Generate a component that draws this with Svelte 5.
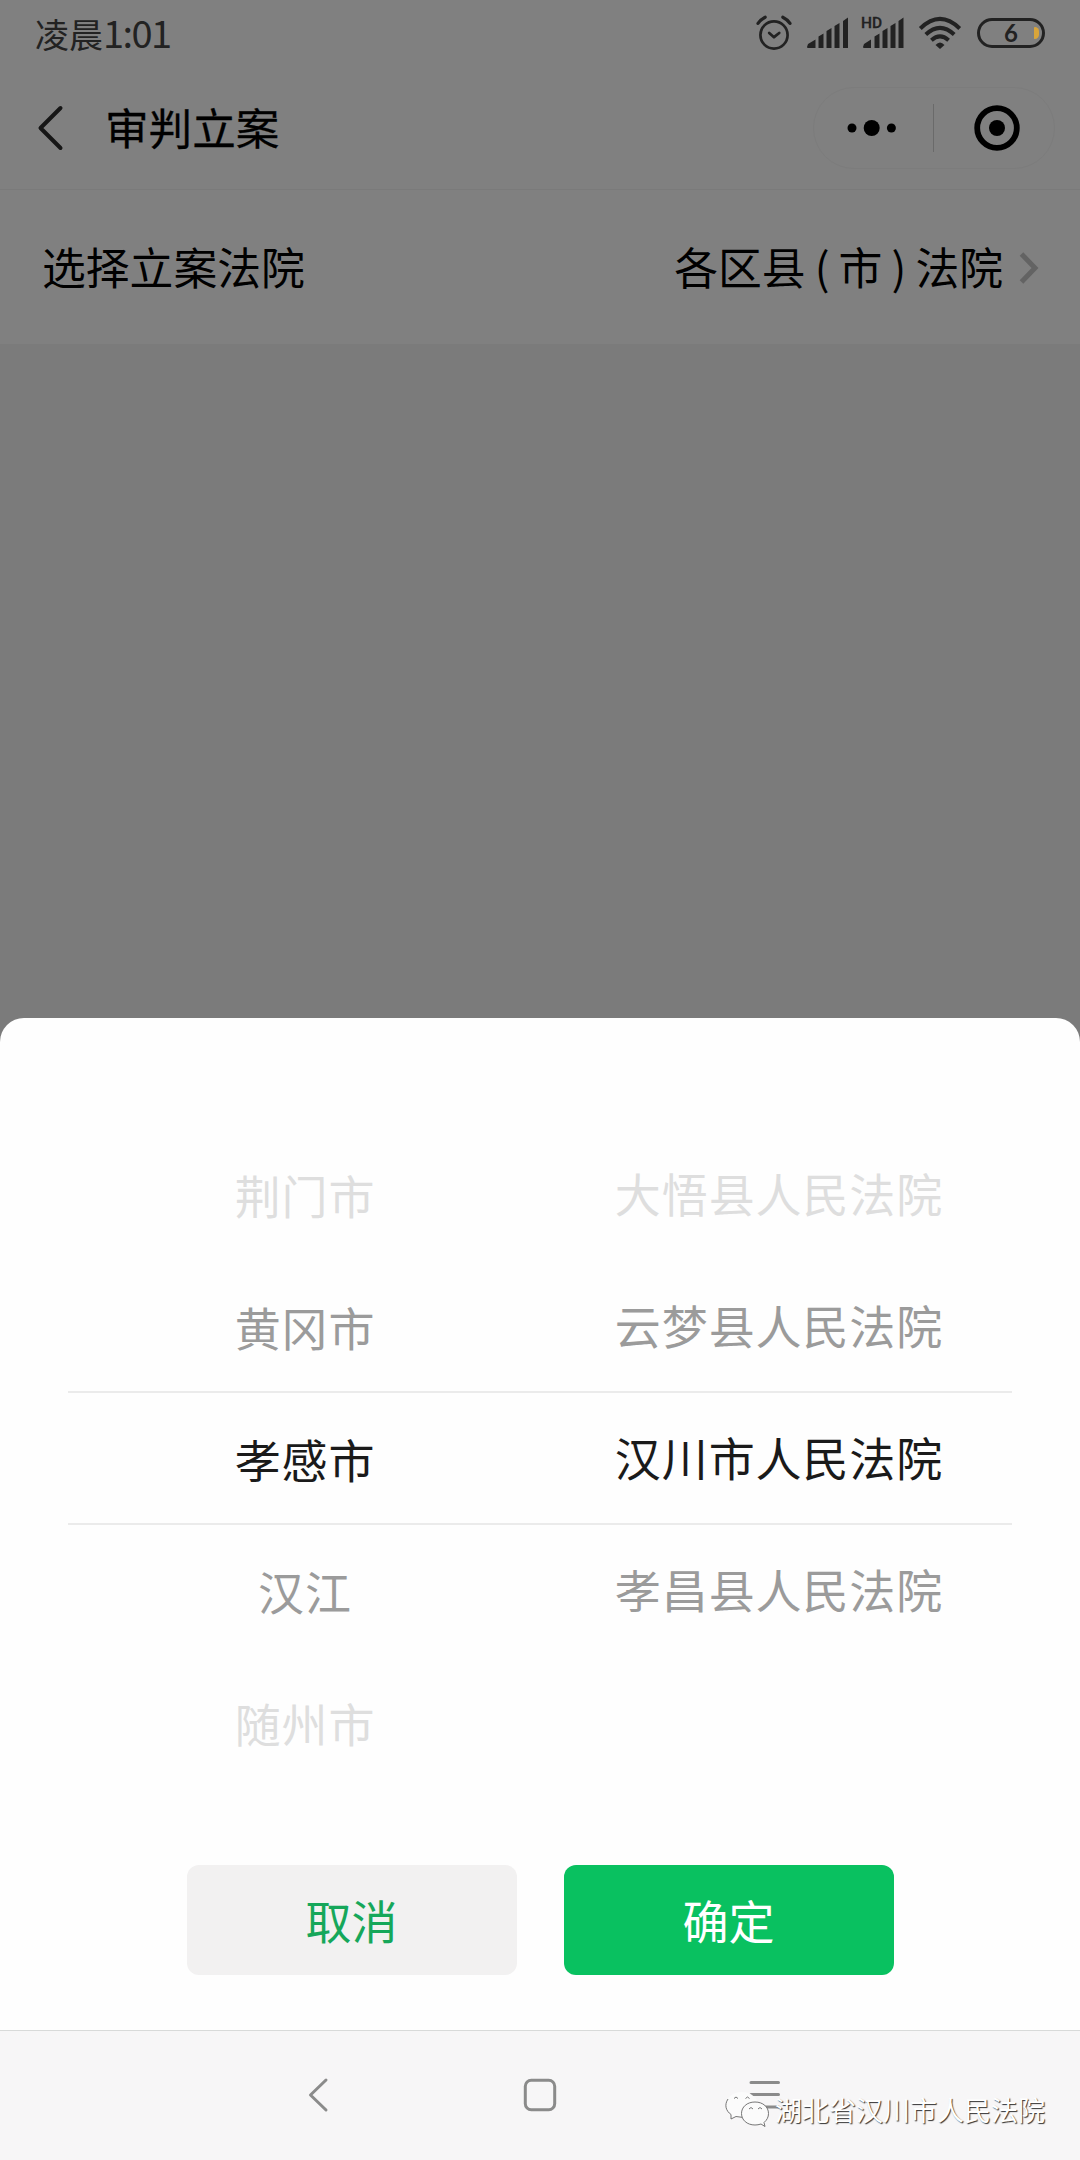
<!-- Script -->
<script>
    const cities = ['荆门市', '黄冈市', '孝感市', '汉江', '随州市'];
    const courts = ['大悟县人民法院', '云梦县人民法院', '汉川市人民法院', '孝昌县人民法院', ''];

    const fade = ['far', 'near', 'selected', 'near', 'far'];
</script>

<!-- Contents -->
<div class="screen">
    <header class="status-bar">
        <span class="time">凌晨<span class="digits">1:01</span></span>

        <div class="status-icons">
            <svg class="alarm" width="36" height="36" viewBox="0 0 36 36">
                <g fill="none" stroke="#222" stroke-width="2.7" stroke-linecap="round">
                    <circle cx="18" cy="20" r="13.6"/>
                    <path d="M13.2 18l4.8 4.2 5.2-4.2" stroke-width="2.8" stroke-linejoin="round"/>
                    <path d="M2 8.400Q5 4.200 9.200 2.200M26.800 2.200Q31.500 4.500 34 8.400" stroke-width="3.200"/>
                </g>
            </svg>
            <svg class="signal" width="42" height="32" viewBox="0 0 42 32">
                <path fill="#222" d="M0 30l1-3 7.500-4.500V31H1Q0 31 0 30zM11.500 19.500l5-3V31h-5zM19.500 14l5-3V31h-5zM27.500 9l5-3V31h-5zM36 4l5-3.500V31h-5z"/>
            </svg>
            <svg class="signal-hd" width="44" height="32" viewBox="0 0 44 32">
                <path fill="#222" d="M2 30l1-3 7-4.500V31H3Q2 31 2 30zM13.500 19.500l5-3V31h-5zM21.500 14l5-3V31h-5zM29.500 9l5-3V31h-5zM37.500 4l5-3.500V31h-5z"/>
                <text x="0" y="11" class="hd">HD</text>
            </svg>
            <svg class="wifi" width="42" height="32" viewBox="0 0 42 32">
                <g fill="none" stroke="#222" stroke-width="4">
                    <path d="M1.300 11.500Q21-7.600 40.700 11.500"/>
                    <path d="M6.800 17.500Q21 4.200 35.200 17.500"/>
                    <path d="M12.400 23.200Q21 15.600 29.600 23.200"/>
                </g>
                <path fill="#222" d="M16.500 28Q21 23 25.500 28L21 32z"/>
            </svg>
            <div class="battery">6<i></i></div>
        </div>
    </header>

    <nav class="title-bar">
        <svg class="back" width="26" height="44" viewBox="0 0 26 44">
            <path d="M22.500 2L2.500 22l20 20" fill="none" stroke="#161616" stroke-width="4" stroke-linecap="round" stroke-linejoin="round"/>
        </svg>
        <h1>审判立案</h1>
        <div class="capsule">
            <svg width="42" height="20" viewBox="0 0 42 20">
                <circle cx="4" cy="10" r="4.500"/>
                <circle cx="23.700" cy="10" r="8"/>
                <circle cx="43.400" cy="10" r="4.500"/>
            </svg>
            <span class="divider"></span>
            <svg width="46" height="46" viewBox="0 0 46 46">
                <circle cx="23" cy="23" r="19.800" fill="none" stroke="#000" stroke-width="5.800"/>
                <circle cx="23" cy="23" r="8"/>
            </svg>
        </div>
    </nav>

    <div class="court-row">
        <span>选择立案法院</span>
        <span class="value">各区县<b>(</b>市<b>)</b>法院</span>
        <svg width="20" height="32" viewBox="0 0 20 32">
            <path d="M1.500 3l13.500 14L1.500 31" fill="none" stroke="#636363" stroke-width="5"/>
        </svg>
    </div>

    <div class="backdrop">
        <section class="sheet">
            <div class="picker">
                <div class="column cities">
                    {#each cities as city, i}
                        <div class="option {fade[i]}"><span>{city}</span></div>
                    {/each}
                </div>
                <div class="column courts">
                    {#each courts as court, i}
                        <div class="option {fade[i]}"><span>{court}</span></div>
                    {/each}
                </div>
            </div>

            <div class="actions">
                <button type="button">取消</button>
                <button type="button" class="confirm">确定</button>
            </div>
        </section>
    </div>

    <footer class="system-nav">
        <svg width="34" height="34" viewBox="0 0 34 34">
            <path d="M26 2L10.500 17 26 32"/>
        </svg>
        <svg width="34" height="34" viewBox="0 0 34 34">
            <rect x="2.300" y="2.300" width="29.400" height="29.400" rx="6"/>
        </svg>
        <svg width="34" height="34" viewBox="0 0 34 34">
            <path d="M5 4.500H32.500M5 16.500H32.500M5 29H32.500"/>
        </svg>

        <div class="watermark">
            <svg width="46" height="38" viewBox="0 0 46 38">
                <g fill="#fbfbfb" stroke="#666" stroke-width="0.900">
                    <path stroke="none" d="M17 1C7 1 1 7 1 14c0 4 2 7 6 10l-1 4 5-2c12 3 22-2 22-12C33 7 26 1 17 1z"/>
                    <path fill="none" d="M3 8C-1 14 1 20 6 23.500l0 4.500 5-2.500 6 .8"/>
                    <path d="M30 11c-8 0-13.500 5-13.500 11.500S22 34 30 34c2 0 4-.3 6-1l4 2.500-1-4c3-2.500 4.500-5.500 4.500-9C43.500 16 38 11 30 11z"/>
                    <path fill="none" d="M9 7.500q2-3 4 0M20.500 7.500q2-3 4 0M24 18q2-3 4 0M33 18q2-3 4 0"/>
                </g>
            </svg>
            <span>湖北省汉川市人民法院</span>
        </div>
    </footer>
</div>

<!-- Style -->
<style>
    :global(body) {
        margin: 0;
    }

    .screen {
        display: flex;
        flex-direction: column;
        width: 1080px;
        height: 2160px;
        background: #808080;
        font-family: "Noto Sans CJK SC", sans-serif;
        color: #000;
        overflow: hidden;
    }

    .screen svg {
        display: block;
        flex: none;
        overflow: visible;
    }

    .status-bar {
        display: flex;
        justify-content: space-between;
        align-items: center;
        height: 66px;
        padding: 0 35px;
        box-sizing: border-box;
        color: #222;
    }

    .time {
        display: flex;
        align-items: center;
        height: 66px;
        box-sizing: border-box;
        font-size: 34px;
    }

    .digits {
        margin-bottom: 3px;
        font-size: 38px;
        letter-spacing: -1.6px;
    }

    .status-icons {
        display: flex;
        align-items: center;
    }

    .signal { margin-left: 15px; }
    .signal-hd { margin-left: 12px; }
    .wifi { margin-left: 14px; }

    .hd {
        font: 500 15.5px Roboto, sans-serif;
        fill: #222;
        stroke: #222;
        stroke-width: 0.3px;
    }

    .battery {
        display: flex;
        justify-content: center;
        align-items: center;
        position: relative;
        width: 68px;
        height: 30px;
        margin-left: 16px;
        border: 3px solid #222;
        border-radius: 15px;
        box-sizing: border-box;
        font: 700 24px/24px Lato, sans-serif;

        & i {
            position: absolute;
            right: 3px;
            top: 6px;
            width: 5px;
            height: 12px;
            border-radius: 1px 5px 5px 1px;
            background: #d9a53a;
        }
    }

    .title-bar {
        display: flex;
        align-items: center;
        height: 124px;
        padding: 0 25px 0 38px;
        border-bottom: 1px solid #7a7a7a;
        box-sizing: border-box;
    }

    h1 {
        flex-grow: 1;
        margin: 0 0 3px 41px;
        font-size: 43.6px;
        font-weight: 400;
        -webkit-text-stroke: 0.3px #000;
    }

    .capsule {
        display: flex;
        align-items: center;
        width: 242px;
        height: 82px;
        padding: 0 34px;
        border: 1px solid #7c7c7c;
        border-radius: 41px;
        box-sizing: border-box;
    }

    .divider {
        flex: none;
        width: 1px;
        height: 48px;
        margin: 0 40px 0 43px;
        background: #6a6a6a;
    }

    .court-row {
        display: flex;
        align-items: center;
        height: 154px;
        padding: 0 40px 0 42px;
        box-sizing: border-box;
        font-size: 43.8px;

        & span {
            margin-bottom: 3px;
        }

        & .value {
            margin-left: auto;
            margin-right: 17px;
        }

        & b {
            display: inline-block;
            width: 33px;
            font-weight: 400;
            text-align: center;
        }
    }

    .backdrop {
        display: flex;
        flex-direction: column;
        justify-content: flex-end;
        flex-grow: 1;
        background: #7b7b7b;
    }

    .sheet {
        height: 1012px;
        padding: 110px 68px 0;
        border-radius: 24px 24px 0 0;
        box-sizing: border-box;
        background: #fefefe;
    }

    .picker {
        display: flex;
        font-size: 46px;
        letter-spacing: 0.9px;
    }

    .column {
        width: 50%;
        text-align: center;
    }

    .option {
        display: flex;
        justify-content: center;
        align-items: center;
        height: 132px;
        box-sizing: border-box;
        white-space: nowrap;
    }

    .cities .option {
        padding-left: 2px;
    }

    .courts .option {
        padding: 0 0 4px 6px;
    }

    .far { color: #dedede; }
    .near { color: #9b9b9b; }

    /* the divider lines straddle the edges of the row */
    .selected {
        height: 134px;
        margin: -1px 0;
        border: solid #ebebeb;
        border-width: 2px 0;
        color: #1a1a1a;
    }

    .actions {
        display: flex;
        justify-content: center;
        gap: 47px;
        margin-top: 77px;
    }

    button {
        width: 330px;
        height: 110px;
        padding: 0 0 3px;
        border: none;
        border-radius: 12px;
        background: #f2f1f1;
        color: #16a75a;
        font-family: inherit;
        font-size: 46px;
    }

    .confirm {
        background: #09c160;
        color: #fff;
    }

    .system-nav {
        display: flex;
        justify-content: center;
        gap: 189px;
        position: relative;
        height: 130px;
        padding-top: 47px;
        border-top: 1px solid #d8dad9;
        box-sizing: border-box;
        background: #f7f6f7;

        & > svg {
            fill: none;
            stroke: #8b8b8b;
            stroke-width: 3;
            stroke-linecap: round;
            stroke-linejoin: round;
        }
    }

    .watermark {
        display: flex;
        align-items: center;
        gap: 4px;
        position: absolute;
        left: 725px;
        top: 59px;
        height: 40px;
        color: #fff;
        font-size: 27px;
        white-space: nowrap;
        text-shadow: 1px 1px 1px #333;

        & span {
            margin-bottom: 2px;
        }
    }
</style>
